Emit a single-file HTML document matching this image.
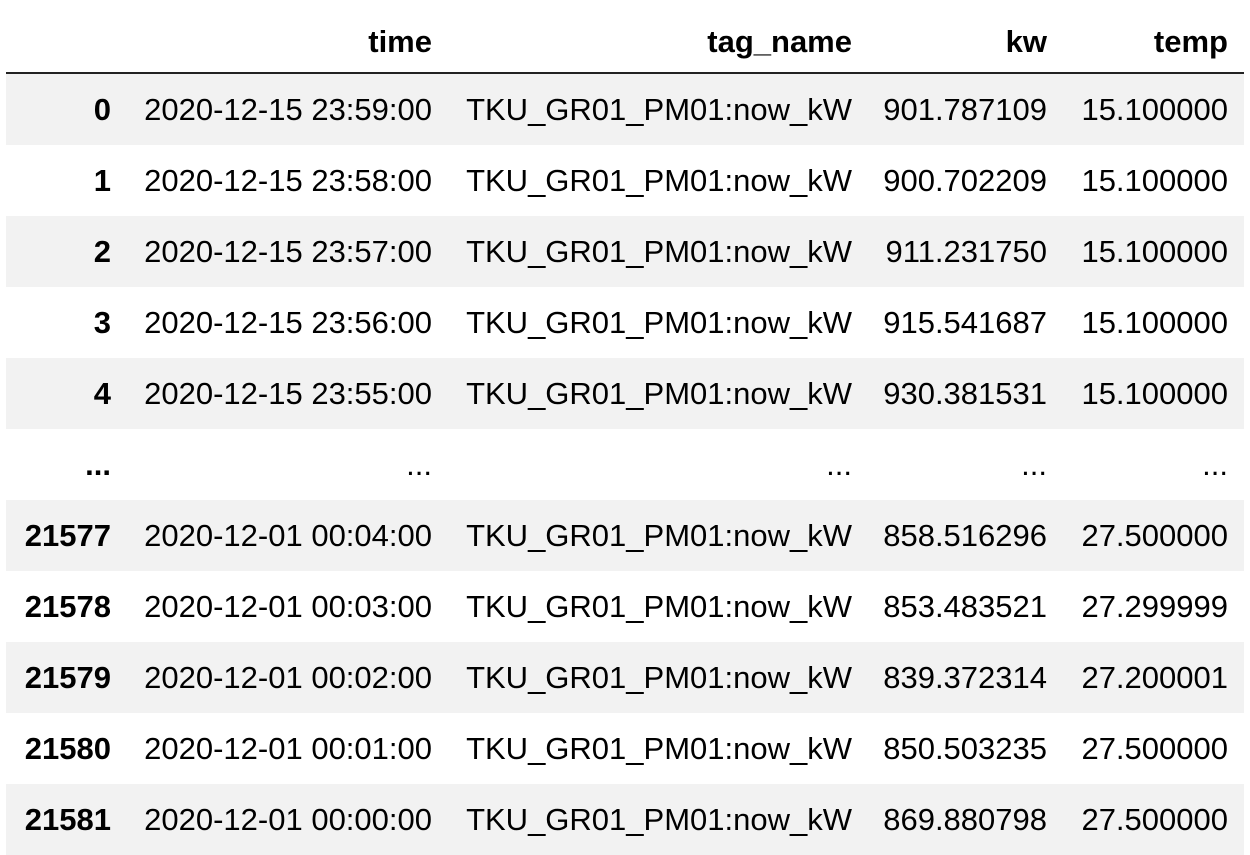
<!DOCTYPE html>
<html><head><style>
body{margin:0;background:#fff;font-family:"Liberation Sans",Arial,sans-serif;}
table{position:absolute;left:6px;top:0;border-collapse:collapse;table-layout:fixed;width:1238px;font-size:31px;color:#000;}
td,th{text-align:right;padding:0 16px 0 0;height:71px;white-space:nowrap;overflow:hidden;}
thead th{height:60px;border-bottom:2px solid #222;font-weight:bold;vertical-align:middle;padding-top:12px;padding-bottom:0;}
tbody th{font-weight:bold;}
tbody tr:nth-child(odd){background:#f2f2f2;}
</style></head><body>
<table>
<colgroup><col style="width:121px"><col style="width:321px"><col style="width:420px"><col style="width:195px"><col style="width:181px"></colgroup>
<thead><tr><th></th><th>time</th><th>tag_name</th><th>kw</th><th>temp</th></tr></thead>
<tbody>
<tr><th>0</th><td>2020-12-15 23:59:00</td><td>TKU_GR01_PM01:now_kW</td><td>901.787109</td><td>15.100000</td></tr>
<tr><th>1</th><td>2020-12-15 23:58:00</td><td>TKU_GR01_PM01:now_kW</td><td>900.702209</td><td>15.100000</td></tr>
<tr><th>2</th><td>2020-12-15 23:57:00</td><td>TKU_GR01_PM01:now_kW</td><td>911.231750</td><td>15.100000</td></tr>
<tr><th>3</th><td>2020-12-15 23:56:00</td><td>TKU_GR01_PM01:now_kW</td><td>915.541687</td><td>15.100000</td></tr>
<tr><th>4</th><td>2020-12-15 23:55:00</td><td>TKU_GR01_PM01:now_kW</td><td>930.381531</td><td>15.100000</td></tr>
<tr><th>...</th><td>...</td><td>...</td><td>...</td><td>...</td></tr>
<tr><th>21577</th><td>2020-12-01 00:04:00</td><td>TKU_GR01_PM01:now_kW</td><td>858.516296</td><td>27.500000</td></tr>
<tr><th>21578</th><td>2020-12-01 00:03:00</td><td>TKU_GR01_PM01:now_kW</td><td>853.483521</td><td>27.299999</td></tr>
<tr><th>21579</th><td>2020-12-01 00:02:00</td><td>TKU_GR01_PM01:now_kW</td><td>839.372314</td><td>27.200001</td></tr>
<tr><th>21580</th><td>2020-12-01 00:01:00</td><td>TKU_GR01_PM01:now_kW</td><td>850.503235</td><td>27.500000</td></tr>
<tr><th>21581</th><td>2020-12-01 00:00:00</td><td>TKU_GR01_PM01:now_kW</td><td>869.880798</td><td>27.500000</td></tr>
</tbody></table>
</body></html>
